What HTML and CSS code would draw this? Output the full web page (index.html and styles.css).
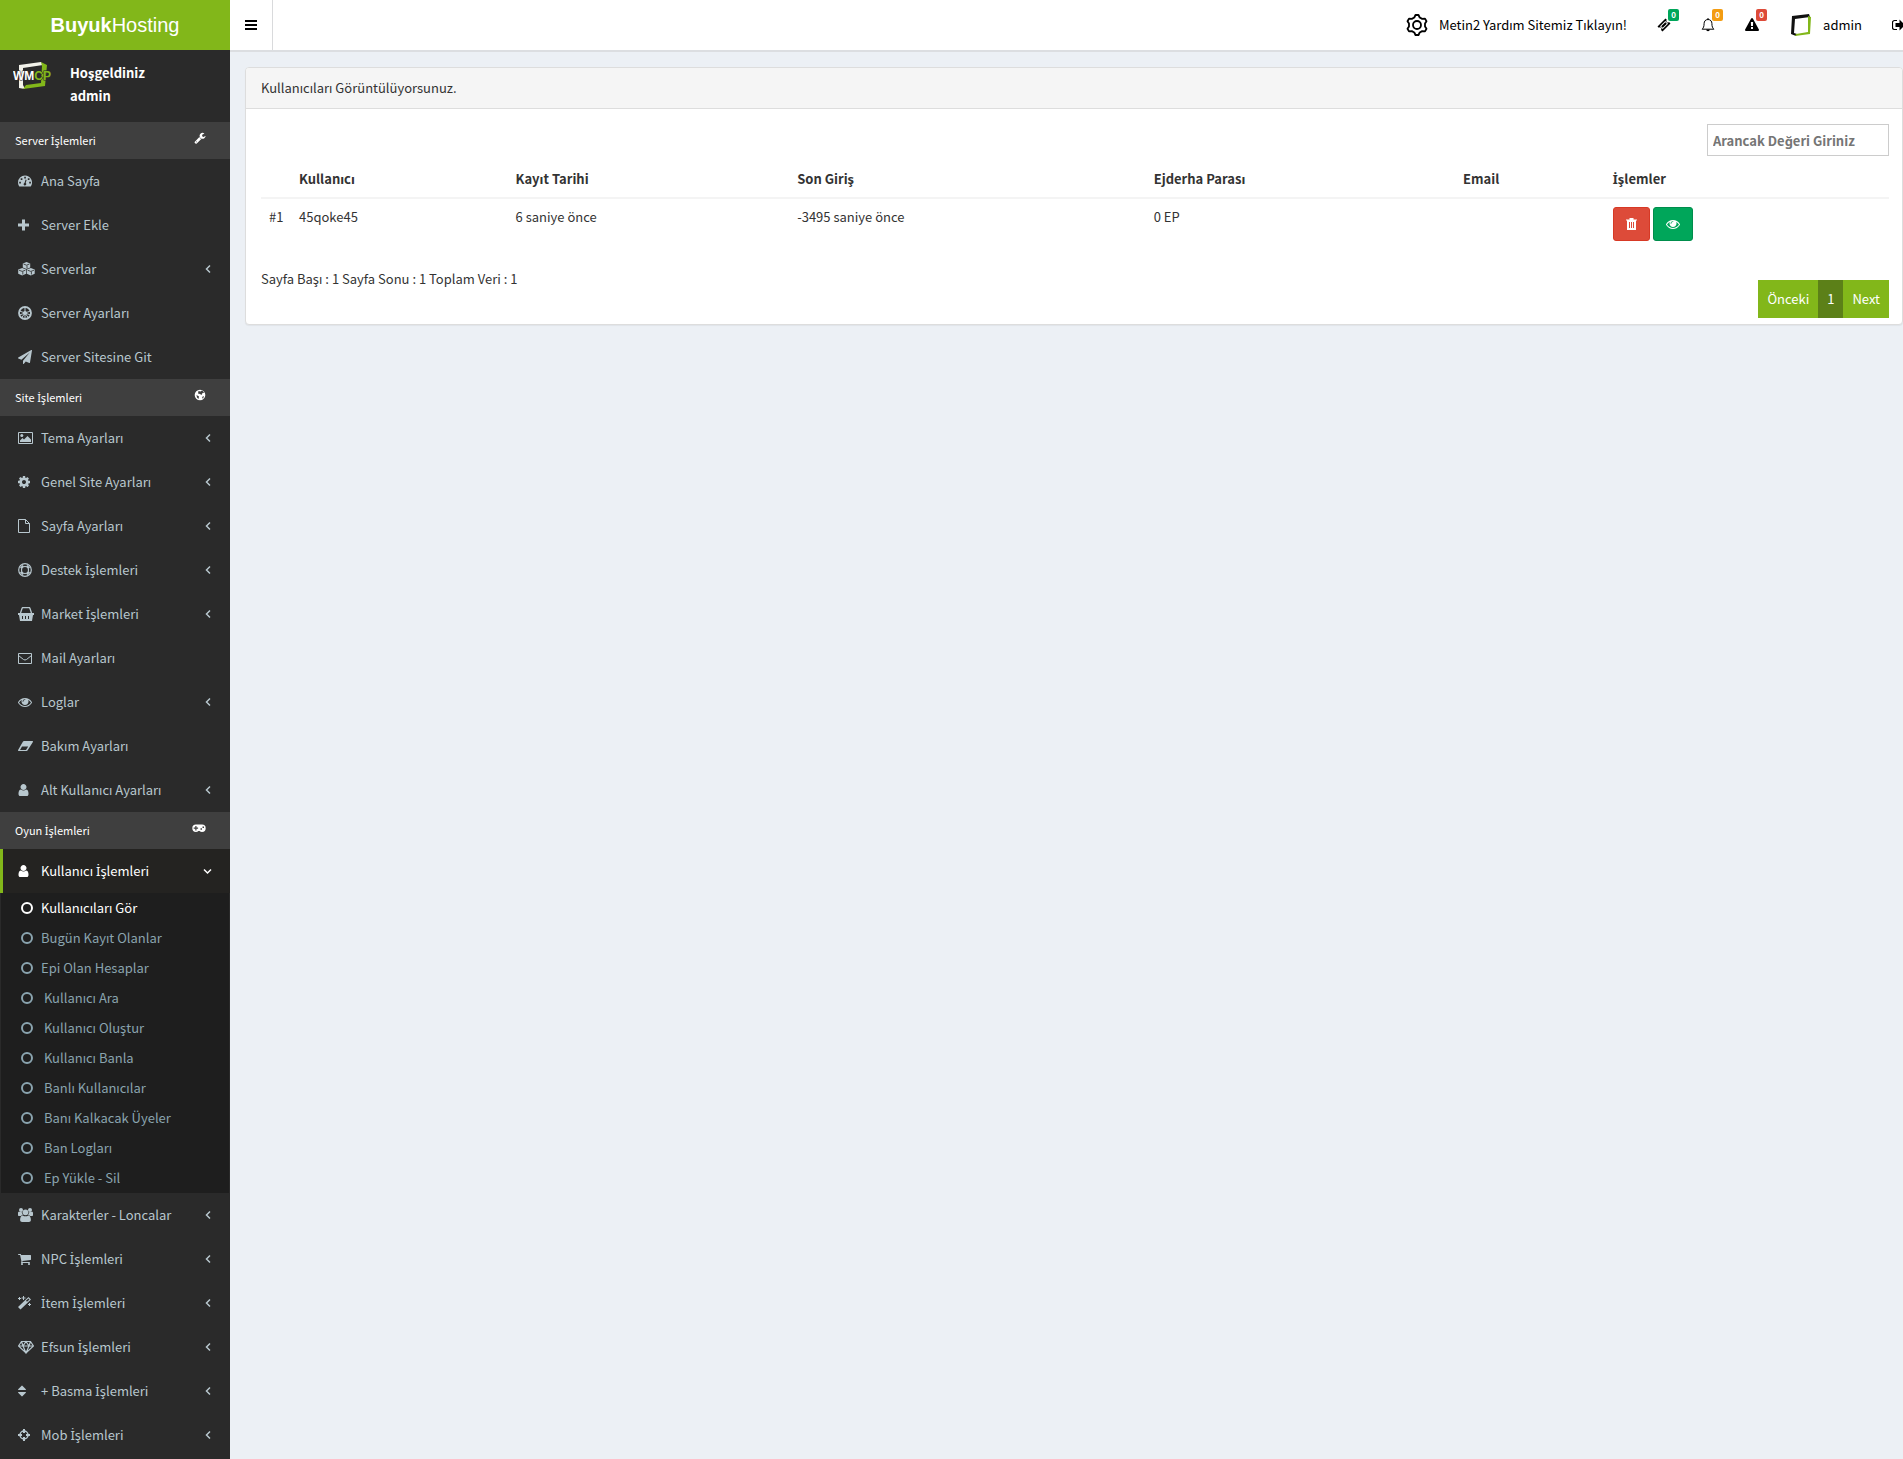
FILE: index.html
```html
<!DOCTYPE html>
<html lang="tr">
<head>
  <meta charset="UTF-8">
  <meta name="viewport" content="width=device-width, initial-scale=1">
  <title>BuyukHosting | Kullanıcılar</title>
  <link rel="stylesheet" href="styles.css">
</head>
<body>

  <!-- icon sprite -->
  <svg class="sprite" aria-hidden="true">
    <symbol id="i-left" viewBox="0 0 6 14"><path d="M5 3.500L1.500 7L5 10.500" fill="none" stroke="currentColor" stroke-width="1.500"/></symbol>
    <symbol id="i-down" viewBox="0 0 9 14"><path d="M1 5.500L4.500 9L8 5.500" fill="none" stroke="currentColor" stroke-width="1.500"/></symbol>
    <symbol id="i-ring" viewBox="0 0 12 14"><circle cx="6" cy="7" r="5" fill="none" stroke="currentColor" stroke-width="2"/></symbol>
    <symbol id="i-user" viewBox="256 0 1408 1792"><path d="M1536 1399q0 109-62.500 187t-150.500 78h-854q-88 0-150.500-78t-62.500-187q0-85 8.500-160.500t31.500-152 58.500-131 94-89 134.500-34.500q131 128 313 128t313-128q76 0 134.500 34.500t94 89 58.500 131 31.500 152 8.500 160.500zm-256-887q0 159-112.500 271.500t-271.500 112.500-271.500-112.500-112.500-271.500 112.500-271.500 271.500-112.500 271.500 112.500 112.500 271.500z"/></symbol>
    <symbol id="i-eye" viewBox="0 0 1792 1792"><path d="M1664 960q-152-236-381-353 61 104 61 225 0 185-131.500 316.500t-316.500 131.500-316.500-131.500-131.500-316.500q0-121 61-225-229 117-381 353 133 205 333.500 326.500t434.500 121.500 434.500-121.500 333.500-326.500zm-720-384q0-20-14-34t-34-14q-125 0-214.500 89.500t-89.500 214.500q0 20 14 34t34 14 34-14 14-34q0-86 61-147t147-61q20 0 34-14t14-34zm848 384q0 34-20 69-140 230-376.500 368.500t-499.500 138.500-499.500-139-376.500-368q-20-35-20-69t20-69q140-229 376.500-368t499.500-139 499.500 139 376.500 368q20 35 20 69z"/></symbol>
  </svg>

  <header class="main-header">
    <a href="#" class="logo"><b>Buyuk</b>Hosting</a>
    <nav class="navbar">
      <button class="sidebar-toggle" type="button" aria-label="Menü">
        <svg width="12" height="14" viewBox="0 0 12 14"><path d="M0 2h12v2H0zM0 6h12v2H0zM0 10h12v2H0z"/></svg>
      </button>
      <ul class="navbar-menu">
        <li>
          <a href="#" class="help">
            <svg width="22" height="22" viewBox="0 0 22 22"><g fill="none" stroke="currentColor" stroke-width="1.800" stroke-linejoin="round"><path d="M9.500 1h3l1.200 2.500 2.500 1.400 2.800-.3 1.500 2.600L19 9.500v3l1.500 2.300-1.500 2.600-2.800-.3-2.500 1.400-1.200 2.500h-3L8.300 18.500l-2.500-1.400-2.800.3-1.500-2.600L3 12.500v-3L1.500 7.200 3 4.600l2.800.3 2.500-1.400z"/><circle cx="11" cy="11" r="4"/></g></svg>
            Metin2 Yardım Sitemiz Tıklayın!
          </a>
        </li>
        <li>
          <a href="#" class="notify" aria-label="Destek">
            <svg width="14" height="14" viewBox="0 0 14 14"><path fill-rule="evenodd" d="M8.500.5l1.300 1.300a1.500 1.500 0 0 0 2.200 2.200l1.500 1.500-8 8-1.500-1.500a1.500 1.500 0 0 0-2.200-2.200L.5 8.500zM8.300 3L3 8.300 5.700 11 11 5.700zM8.300 4.200l1.500 1.500-4.100 4.100-1.500-1.500z"/></svg>
            <span class="label green">0</span>
          </a>
        </li>
        <li>
          <a href="#" class="notify" aria-label="Bildirimler">
            <svg width="14" height="14" viewBox="0 0 14 14"><path d="M7 1.500c-2.600 0-3.900 1.900-3.900 4 0 3.200-.8 4.600-2 5.700h11.800c-1.200-1.100-2-2.500-2-5.700 0-2.100-1.300-4-3.900-4zM7 0v1.500" fill="none" stroke="currentColor"/><path d="M5.200 11.500h3.600a1.800 1.800 0 0 1-3.600 0z"/></svg>
            <span class="label orange">0</span>
          </a>
        </li>
        <li>
          <a href="#" class="notify" aria-label="Uyarılar">
            <svg width="14" height="14" viewBox="0 0 1792 1792"><path d="M1024 1375v-190q0-14-9.500-23.500t-22.500-9.500h-192q-13 0-22.500 9.500t-9.500 23.500v190q0 14 9.500 23.500t22.500 9.500h192q13 0 22.500-9.500t9.500-23.500zm-2-374l18-459q0-12-10-19-13-11-24-11h-220q-11 0-24 11-10 7-10 21l17 457q0 10 10 16.500t24 6.500h185q14 0 23.500-6.500t10.500-16.500zm-14-934l768 1408q35 63-2 126-17 29-46.500 46t-63.500 17h-1536q-34 0-63.500-17t-46.500-46q-37-63-2-126l768-1408q17-31 47-49t65-18 65 18 47 49z"/></svg>
            <span class="label red">0</span>
          </a>
        </li>
        <li>
          <a href="#" class="user">
            <svg width="24" height="24" viewBox="0 0 24 24"><path fill="#111" d="M3 3l17-2 1 3L6 6 5 20l3 1-1 2-5-2z"/><path fill="#82b71a" d="M19 3l3 1-1 17-15 2 1-2 12-2z"/></svg>
            admin
          </a>
        </li>
        <li>
          <a href="#" class="logout" aria-label="Çıkış">
            <svg width="13" height="14" viewBox="0 0 13 14"><path d="M5 2.500H2.500a2 2 0 0 0-2 2v5a2 2 0 0 0 2 2H5" fill="none" stroke="currentColor" stroke-width="1.200"/><path d="M13 7L7.500 1.500V5h-4v4h4v3.500z"/></svg>
          </a>
        </li>
      </ul>
    </nav>
  </header>

  <div class="wrapper">
    <aside class="main-sidebar">
      <div class="user-panel">
        <svg width="40" height="30" viewBox="0 0 40 30"><path fill="#f2f2ea" d="M6 4l22-3 2 3-20 3v17l2 4-6-1z"/><path fill="#82b71a" d="M28 1l6 3-2 21-22 3 3-4 15-2 1-17z"/><text x="0" y="19" class="wmcp">WM<tspan class="cp">CP</tspan></text></svg>
        <p>Hoşgeldiniz<br>admin</p>
      </div>

      <ul class="sidebar-menu">
        <li class="header"><span>Server <span class="dot-i">İ</span>şlemleri</span>
          <svg width="12" height="12" viewBox="0 0 1792 1792"><path d="M448 1472q0-26-19-45t-45-19-45 19-19 45 19 45 45 19 45-19 19-45zm644-420l-682 682q-37 37-90 37-52 0-91-37l-106-108q-38-36-38-90 0-53 38-91l681-681q39 98 114.500 173.500t173.500 114.500zm634-435q0 39-23 106-47 134-164.500 217.500t-258.500 83.500q-185 0-316.500-131.500t-131.500-316.500 131.500-316.500 316.500-131.500q58 0 121.500 16.500t107.500 46.500q16 11 16 28t-16 28l-293 169v224l193 107q5-3 79-48.500t135.500-81 70.500-35.500q15 0 23.500 10t8.500 25z"/></svg>
        </li>
        <li><a href="#"><span class="icon"><svg width="14" height="14" viewBox="0 0 14 14"><path fill-rule="evenodd" d="M7 1.500a7 7 0 0 0-7 7c0 1.400.4 2.600 1.100 3.700.2.200.4.300.6.300h10.600c.2 0 .4-.1.600-.3A7 7 0 0 0 7 1.500zM6.200 2.800h1.700v1.700H6.200zM2.700 4.300h1.700V6H2.700zM9.800 4.300h1.700V6H9.800zM1.200 7.700h1.700v1.700H1.200zM11.200 7.700h1.700v1.700h-1.700zM7.600 5.600l1 .3-.9 3c1.200 1 .5 2.500-.7 2.500-1.500 0-2-1.800-.4-2.600z"/></svg></span>Ana Sayfa</a></li>
        <li><a href="#"><span class="icon"><svg width="12" height="14" viewBox="0 0 12 14"><path d="M4 1.500h3v4h4v3H7v4H4v-4H0v-3h4z"/></svg></span>Server Ekle</a></li>
        <li><a href="#"><span class="icon"><svg width="18" height="14" viewBox="0 0 18 14"><path d="M8.500 0l3.700 1.400v4L8.500 7 4.800 5.400v-4zM4.200 6l3.900 1.500v4.200L4.200 13.500.2 11.700V7.500zM12.800 6l3.900 1.500v4.200l-3.900 1.800-4-1.800V7.500z"/><path d="M5.500 2l3 1.200L11.500 2M1 8.200l3.200 1.200 3.200-1.200M9.600 8.200l3.200 1.200L16 8.200M4.800 9.500v3M13.400 9.500v3M9 3.500v3" fill="none" stroke="#2a2a2a" stroke-width=".8"/></svg></span>Serverlar<svg class="arrow" width="6" height="14"><use href="#i-left"/></svg></a></li>
        <li><a href="#"><span class="icon"><svg width="14" height="14" viewBox="0 0 14 14"><circle cx="7" cy="7" r="6" fill="none" stroke="currentColor" stroke-width="1.800"/><path d="M7 1v12M1.500 5l11 4M12.500 5l-11 4M3.500 12L7 7l3.500 5" stroke="currentColor" fill="none"/><circle cx="7" cy="7" r="2"/></svg></span>Server Ayarları</a></li>
        <li><a href="#"><span class="icon"><svg width="14" height="14" viewBox="0 0 1792 1792"><path d="M1764 11q33 24 27 64l-256 1536q-5 29-32 45-14 8-31 8-11 0-24-5l-453-185-242 295q-18 23-49 23-13 0-22-4-19-7-30.500-23.500t-11.500-36.500v-349l864-1059-1069 925-395-162q-37-14-40-55-2-40 32-59l1664-960q15-9 32-9 20 0 36 11z"/></svg></span>Server Sitesine Git</a></li>

        <li class="header"><span>Site <span class="dot-i">İ</span>şlemleri</span>
          <svg width="12" height="12" viewBox="0 0 12 12"><circle cx="6" cy="6" r="5.300"/><path d="M4.500 2l2 .5 1.500-1 2.500 2-2 .5-1 2-1.500-1-2-.5zM2.500 6l2.500 1.500L4.500 10 3 8.500zM8 8l2-1-1 3z" fill="#3f3f3f"/></svg>
        </li>
        <li><a href="#"><span class="icon"><svg width="15" height="14" viewBox="0 0 15 14"><path d="M.5 1.500h14v11H.5z" fill="none" stroke="currentColor"/><path d="M2 11V9.500L4.500 7 6 8.500 9.500 5 13 8.500V11z"/><circle cx="3.800" cy="4.500" r="1.500"/></svg></span>Tema Ayarları<svg class="arrow" width="6" height="14"><use href="#i-left"/></svg></a></li>
        <li><a href="#"><span class="icon"><svg width="12" height="14" viewBox="128 0 1536 1792"><path d="M1152 896q0-106-75-181t-181-75-181 75-75 181 75 181 181 75 181-75 75-181zm512-109v222q0 12-8 23t-20 13l-185 28q-19 54-39 91 35 50 107 138 10 12 10 25t-9 23q-27 37-99 108t-94 71q-12 0-26-9l-138-108q-44 23-91 38-16 136-29 186-7 28-36 28h-222q-14 0-24.500-8.500t-11.500-21.500l-28-184q-49-16-90-37l-141 107q-10 9-25 9-14 0-25-11-126-114-165-168-7-10-7-23 0-12 8-23 15-21 51-66.500t54-70.500q-27-50-41-99l-183-27q-13-2-21-12.500t-8-23.500v-222q0-12 8-23t19-13l186-28q14-46 39-92-40-57-107-138-10-12-10-24 0-10 9-23 26-36 98.500-107.500t94.500-71.500q13 0 26 10l138 107q44-23 91-38 16-136 29-186 7-28 36-28h222q14 0 24.500 8.500t11.500 21.500l28 184q49 16 90 37l142-107q9-9 24-9 13 0 25 10 129 119 165 170 7 8 7 22 0 12-8 23-15 21-51 66.500t-54 70.500q26 50 41 98l183 28q13 2 21 12.500t8 23.500z"/></svg></span>Genel Site Ayarları<svg class="arrow" width="6" height="14"><use href="#i-left"/></svg></a></li>
        <li><a href="#"><span class="icon"><svg width="12" height="14" viewBox="0 0 12 14"><path d="M.5.5h7l4 4v9H.5zM7.500.5v4h4" fill="none" stroke="currentColor"/></svg></span>Sayfa Ayarları<svg class="arrow" width="6" height="14"><use href="#i-left"/></svg></a></li>
        <li><a href="#"><span class="icon"><svg width="14" height="14" viewBox="0 0 14 14"><circle cx="7" cy="7" r="6.300" fill="none" stroke="currentColor" stroke-width="1.200"/><circle cx="7" cy="7" r="3.500" fill="none" stroke="currentColor" stroke-width="1.200"/><path d="M2 4.500L4.500 2l1.300 1.300-2.500 2.500zM12 4.500L9.500 2 8.200 3.300l2.500 2.500zM2 9.500L4.500 12l1.300-1.300-2.500-2.500zM12 9.500L9.500 12l-1.300-1.300 2.500-2.500z"/></svg></span><span>Destek <span class="dot-i">İ</span>şlemleri</span><svg class="arrow" width="6" height="14"><use href="#i-left"/></svg></a></li>
        <li><a href="#"><span class="icon"><svg width="16" height="14" viewBox="0 0 16 14"><path fill-rule="evenodd" d="M0 6h16v2h-1l-1 6H2L1 8H0zM4 9v3h1V9zM7 9v3h1V9zM10 9v3h1V9z"/><path d="M2.500 6L4 1.500c.2-.6.500-1 1-1h6c.5 0 .8.400 1 1L13.500 6" fill="none" stroke="currentColor" stroke-width="1.300"/></svg></span><span>Market <span class="dot-i">İ</span>şlemleri</span><svg class="arrow" width="6" height="14"><use href="#i-left"/></svg></a></li>
        <li><a href="#"><span class="icon"><svg width="14" height="14" viewBox="0 0 14 14"><path d="M.5 2.500h13v10H.5zM.5 4.500l5 4q1.500 1 3 0l5-4" fill="none" stroke="currentColor"/></svg></span>Mail Ayarları</a></li>
        <li><a href="#"><span class="icon"><svg width="14" height="14"><use href="#i-eye"/></svg></span>Loglar<svg class="arrow" width="6" height="14"><use href="#i-left"/></svg></a></li>
        <li><a href="#"><span class="icon"><svg width="15" height="14" viewBox="0 0 15 14"><path fill-rule="evenodd" d="M6 2h8.500c.5 0 .6.500.4.900L9.500 11.500c-.2.300-.5.500-.9.500H.5c-.5 0-.6-.5-.4-.9L5 2.600c.3-.4.600-.6 1-.6zM4 7.500L2 11h6l2.200-3.500z"/></svg></span>Bakım Ayarları</a></li>
        <li><a href="#"><span class="icon"><svg width="12" height="14"><use href="#i-user"/></svg></span>Alt Kullanıcı Ayarları<svg class="arrow" width="6" height="14"><use href="#i-left"/></svg></a></li>

        <li class="header"><span>Oyun <span class="dot-i">İ</span>şlemleri</span>
          <svg width="14" height="12" viewBox="0 0 14 12"><path fill-rule="evenodd" d="M4 2.500h6a3.700 3.700 0 0 1 0 7.400c-1 0-1.700-.3-2.400-1H6.400c-.7.700-1.400 1-2.400 1a3.700 3.700 0 0 1 0-7.400zM3.300 4v1.600H1.700v1.200h1.600v1.600h1.200V6.800h1.600V5.600H4.500V4zM8.500 6.300v1.500H10V6.300zM10.500 4.500V6H12V4.500z"/></svg>
        </li>
        <li class="active">
          <a href="#"><span class="icon"><svg width="12" height="14"><use href="#i-user"/></svg></span><span>Kullanıcı <span class="dot-i">İ</span>şlemleri</span><svg class="arrow" width="9" height="14"><use href="#i-down"/></svg></a>
          <ul class="treeview-menu">
            <li class="current"><a href="#"><svg width="12" height="14"><use href="#i-ring"/></svg>Kullanıcıları Gör</a></li>
            <li><a href="#"><svg width="12" height="14"><use href="#i-ring"/></svg>Bugün Kayıt Olanlar</a></li>
            <li><a href="#"><svg width="12" height="14"><use href="#i-ring"/></svg>Epi Olan Hesaplar</a></li>
            <li><a href="#"><svg width="12" height="14"><use href="#i-ring"/></svg>&nbsp;Kullanıcı Ara</a></li>
            <li><a href="#"><svg width="12" height="14"><use href="#i-ring"/></svg>&nbsp;Kullanıcı Oluştur</a></li>
            <li><a href="#"><svg width="12" height="14"><use href="#i-ring"/></svg>&nbsp;Kullanıcı Banla</a></li>
            <li><a href="#"><svg width="12" height="14"><use href="#i-ring"/></svg>&nbsp;Banlı Kullanıcılar</a></li>
            <li><a href="#"><svg width="12" height="14"><use href="#i-ring"/></svg>&nbsp;Banı Kalkacak Üyeler</a></li>
            <li><a href="#"><svg width="12" height="14"><use href="#i-ring"/></svg>&nbsp;Ban Logları</a></li>
            <li><a href="#"><svg width="12" height="14"><use href="#i-ring"/></svg>&nbsp;Ep Yükle - Sil</a></li>
          </ul>
        </li>
        <li><a href="#"><span class="icon"><svg width="15" height="14" viewBox="0 0 15 14"><circle cx="3" cy="2" r="2"/><circle cx="12" cy="2" r="2"/><circle cx="7.500" cy="4.300" r="2.900"/><path d="M0 7V5c0-1 .6-1.300 1.200-1.200L4 4.300c0 1.200.4 2 1 2.700-1 0-1.700.4-2.200 1H1c-.6 0-1-.4-1-1zM15 7V5c0-1-.6-1.300-1.200-1.200L11 4.300c0 1.200-.4 2-1 2.700 1 0 1.700.4 2.200 1H14c.6 0 1-.4 1-1zM4.800 7.400c1.600 1.200 3.800 1.200 5.400 0 1.800 0 2.700 2 2.700 4.600 0 1.300-.8 2-2 2H4.100c-1.200 0-2-.7-2-2 0-2.600.9-4.600 2.700-4.600z"/></svg></span>Karakterler - Loncalar<svg class="arrow" width="6" height="14"><use href="#i-left"/></svg></a></li>
        <li><a href="#"><span class="icon"><svg width="13" height="14" viewBox="64 0 1664 1792"><path d="M704 1536q0 52-38 90t-90 38-90-38-38-90 38-90 90-38 90 38 38 90zm896 0q0 52-38 90t-90 38-90-38-38-90 38-90 90-38 90 38 38 90zm128-1088v512q0 24-16.500 42.500t-40.500 21.500l-1044 122q13 60 13 70 0 16-24 64h920q26 0 45 19t19 45-19 45-45 19h-1024q-26 0-45-19t-19-45q0-11 8-31.500t16-36 21.500-40 15.500-29.500l-177-823h-204q-26 0-45-19t-19-45 19-45 45-19h256q16 0 28.500 6.500t19.500 15.500 13 24.500 8 26 5.500 29.500 4.500 26h1201q26 0 45 19t19 45z"/></svg></span><span>NPC <span class="dot-i">İ</span>şlemleri</span><svg class="arrow" width="6" height="14"><use href="#i-left"/></svg></a></li>
        <li><a href="#"><span class="icon"><svg width="13" height="14" viewBox="0 0 13 14"><path fill-rule="evenodd" d="M10.500 1L13 3.500 2.500 13.500 0 11zM10.400 2.500L8 4.800l1 1 2.500-2.300z"/><path d="M1.500 1v3M0 2.500h3M5.500 0v4M3.500 2h4M11.500 7v3M10 8.500h3" stroke="currentColor"/></svg></span><span><span class="dot-i">İ</span>tem <span class="dot-i">İ</span>şlemleri</span><svg class="arrow" width="6" height="14"><use href="#i-left"/></svg></a></li>
        <li><a href="#"><span class="icon"><svg width="16" height="14" viewBox="0 0 16 14"><path d="M3.500 1.500h9L15.500 6 8 13 .5 6zM.5 6h15M3.500 1.500L5 6l3 7 3-7 1.500-4.500M5 6l3-4.500L11 6" fill="none" stroke="currentColor" stroke-width="1.200"/></svg></span><span>Efsun <span class="dot-i">İ</span>şlemleri</span><svg class="arrow" width="6" height="14"><use href="#i-left"/></svg></a></li>
        <li><a href="#"><span class="icon"><svg width="8" height="14" viewBox="384 0 1024 1792"><path d="M1408 1088q0 26-19 45l-448 448q-19 19-45 19t-45-19l-448-448q-19-19-19-45t19-45 45-19h896q26 0 45 19t19 45zm0-384q0 26-19 45t-45 19h-896q-26 0-45-19t-19-45 19-45l448-448q19-19 45-19t45 19l448 448q19 19 19 45z"/></svg></span><span>+ Basma <span class="dot-i">İ</span>şlemleri</span><svg class="arrow" width="6" height="14"><use href="#i-left"/></svg></a></li>
        <li><a href="#"><span class="icon"><svg width="12" height="14" viewBox="0 0 12 14"><circle cx="6" cy="7" r="4" fill="none" stroke="currentColor" stroke-width="1.500"/><path d="M5 1h2v4H5zM5 9h2v4H5zM0 6h4v2H0zM8 6h4v2H8z"/></svg></span><span>Mob <span class="dot-i">İ</span>şlemleri</span><svg class="arrow" width="6" height="14"><use href="#i-left"/></svg></a></li>
      </ul>
    </aside>

    <main class="content">
      <section class="panel">
        <div class="panel-heading">Kullanıcıları Görüntülüyorsunuz.</div>
        <div class="panel-body">
          <form class="search">
            <input type="text" placeholder="Arancak Değeri Giriniz" aria-label="Arancak Değeri Giriniz">
          </form>
          <table>
            <colgroup>
              <col class="c-id"><col class="c-name"><col class="c-date"><col class="c-login"><col class="c-ep"><col class="c-mail"><col>
            </colgroup>
            <thead>
              <tr><th></th><th>Kullanıcı</th><th>Kayıt Tarihi</th><th>Son Giriş</th><th>Ejderha Parası</th><th>Email</th><th><span class="dot-i">İ</span>şlemler</th></tr>
            </thead>
            <tbody>
              <tr>
                <td>#1</td><td>45qoke45</td><td>6 saniye önce</td><td>-3495 saniye önce</td><td>0 EP</td><td></td>
                <td>
                  <div class="actions">
                    <button type="button" class="btn btn-danger" aria-label="Sil"><svg width="11" height="14" viewBox="0 0 11 14"><path fill-rule="evenodd" d="M3.500 1h4v1.500H11v1H10V13H1V3.500H0v-1h3.500zM3 5v6h1V5zM5 5v6h1V5zM7 5v6h1V5z"/></svg></button>
                    <button type="button" class="btn btn-success" aria-label="Gör"><svg width="14" height="14"><use href="#i-eye"/></svg></button>
                  </div>
                </td>
              </tr>
            </tbody>
          </table>
          <div class="panel-bottom">
            <div>Sayfa Başı : 1 Sayfa Sonu : 1 Toplam Veri : 1</div>
            <div class="pagination">
              <a href="#">Önceki</a>
              <a href="#" class="on">1</a>
              <a href="#">Next</a>
            </div>
          </div>
        </div>
      </section>
    </main>
  </div>

</body>
</html>
```
FILE: styles.css
```css
* {
  box-sizing: border-box;
}

body {
  margin: 0;
  font-family: "Noto Sans CJK SC", "Noto Sans", sans-serif;
  font-size: 13px;
  line-height: 20px;
  color: #333;
  background: #ecf0f5;
  overflow-x: hidden;
}

a {
  color: inherit;
  text-decoration: none;
}

ul {
  list-style: none;
  margin: 0;
  padding: 0;
}

svg {
  fill: currentColor;
  flex: none;
}

.sprite {
  display: none;
}

/* the main font has no dotted capital i */
.dot-i {
  font-family: "Noto Sans", sans-serif;
  line-height: 1;
}

/* header */
.main-header {
  display: flex;
  height: 50px;
}

.logo {
  width: 230px;
  background: #82b71a;
  color: #fff;
  font-family: "Liberation Sans", Arial, sans-serif;
  font-size: 20px;
  line-height: 50px;
  text-align: center;
}

.navbar {
  flex: 1;
  display: flex;
  justify-content: space-between;
  height: 52px;
  background: #fff;
  border-bottom: 2px solid #dcdee1;
  color: #000;
}

.sidebar-toggle {
  width: 43px;
  padding: 0 15px;
  border: 0;
  border-right: 1px solid #d9dadc;
  background: none;
  color: #000;
  display: flex;
  align-items: center;
}

.navbar-menu {
  display: flex;
}

.navbar-menu a {
  display: flex;
  align-items: center;
  height: 50px;
  padding: 0 15px;
}

.help {
  gap: 11px;
}

.notify {
  position: relative;
}

.label {
  position: absolute;
  top: 9px;
  right: 7px;
  width: 11px;
  height: 12px;
  border-radius: 2px;
  color: #fff;
  font-size: 8px;
  font-weight: bold;
  line-height: 12px;
  text-align: center;
}

.green { background: #00a65a; }
.orange { background: #f39c12; }
.red { background: #dd4b39; }

.user {
  gap: 10px;
}

.navbar-menu .logout {
  width: 26px;
  padding-right: 0;
  overflow: hidden;
}

.wrapper {
  display: flex;
  min-height: calc(100vh - 50px);
}

/* sidebar */
.main-sidebar {
  width: 230px;
  flex: none;
  background: #2a2a2a;
}

.user-panel {
  display: flex;
  gap: 17px;
  height: 72px;
  padding: 11px 13px;
  color: #fff;
  font-weight: bold;
}

.user-panel p {
  margin: 0;
  line-height: 23px;
}

.wmcp {
  fill: #fff;
  stroke: #2a2a2a;
  stroke-width: 1px;
  paint-order: stroke;
  font-family: "Liberation Sans", Arial, sans-serif;
  font-size: 12px;
  font-weight: bold;
}

.cp {
  fill: #82b71a;
}

.sidebar-menu .header {
  display: flex;
  justify-content: space-between;
  height: 37px;
  padding: 7px 24px 8px 15px;
  background: #3f3f3f;
  color: #fff;
  font-size: 11px;
  line-height: 22px;
}

.header svg {
  margin-top: 3px;
}

.sidebar-menu > li > a {
  display: flex;
  align-items: center;
  height: 44px;
  padding-right: 19px;
  padding-left: 15px;
  border-left: 3px solid transparent;
  color: #b8c7ce;
}

.icon {
  display: flex;
  width: 23px;
}

.arrow {
  margin-left: auto;
}

.sidebar-menu > .active > a {
  padding-right: 18px;
  background: #242321;
  border-left-color: #82b71a;
  color: #fff;
}

.treeview-menu {
  margin: 0 1px;
  background: #1e1e1e;
}

.treeview-menu a {
  display: flex;
  align-items: center;
  gap: 8px;
  height: 30px;
  padding-left: 20px;
  color: #8aa4af;
}

.treeview-menu .current a {
  color: #fff;
}

/* content */
.content {
  flex: 1;
  min-width: 0;
  padding: 17px 0 15px 15px;
}

.panel {
  background: #fff;
  border: 1px solid #ddd;
  border-radius: 4px;
  box-shadow: 0 1px 1px rgba(0, 0, 0, .05);
}

.panel-heading {
  padding: 10px 15px;
  background: #f5f5f5;
  border-bottom: 1px solid #ddd;
  border-radius: 3px 3px 0 0;
}

.panel-body {
  padding: 15px 13px 6px 15px;
}

.search {
  display: flex;
  justify-content: flex-end;
}

.search input {
  width: 182px;
  height: 32px;
  padding: 0 5px;
  border: 1px solid #ccc;
  font: inherit;
  font-weight: bold;
}

.search input::placeholder {
  color: #757575;
}

table {
  width: 100%;
  margin-top: 5px;
  border-collapse: collapse;
  table-layout: fixed;
}

.c-id { width: 30px; }
.c-name { width: 13.3%; }
.c-date { width: 17.3%; }
.c-login { width: 21.9%; }
.c-ep { width: 19%; }
.c-mail { width: 9.2%; }

th,
td {
  padding: 8px;
  text-align: left;
  vertical-align: top;
}

td:first-child {
  padding-right: 0;
}

th {
  border-bottom: 2px solid #f4f4f4;
}

.actions {
  display: flex;
  gap: 3px;
}

.btn {
  height: 34px;
  padding: 0 12px;
  border: 1px solid;
  border-radius: 3px;
  color: #fff;
  display: flex;
  align-items: center;
}

.btn-danger {
  background: #dd4b39;
  border-color: #d73925;
}

.btn-success {
  background: #00a65a;
  border-color: #008d4c;
}

.panel-bottom {
  display: flex;
  justify-content: space-between;
  margin-top: 20px;
}

.pagination {
  display: flex;
  margin-top: 11px;
  color: #fff;
  background: #82b71a;
}

.pagination a {
  padding: 9px;
}

.pagination .on {
  background: #5c8018;
}
```
